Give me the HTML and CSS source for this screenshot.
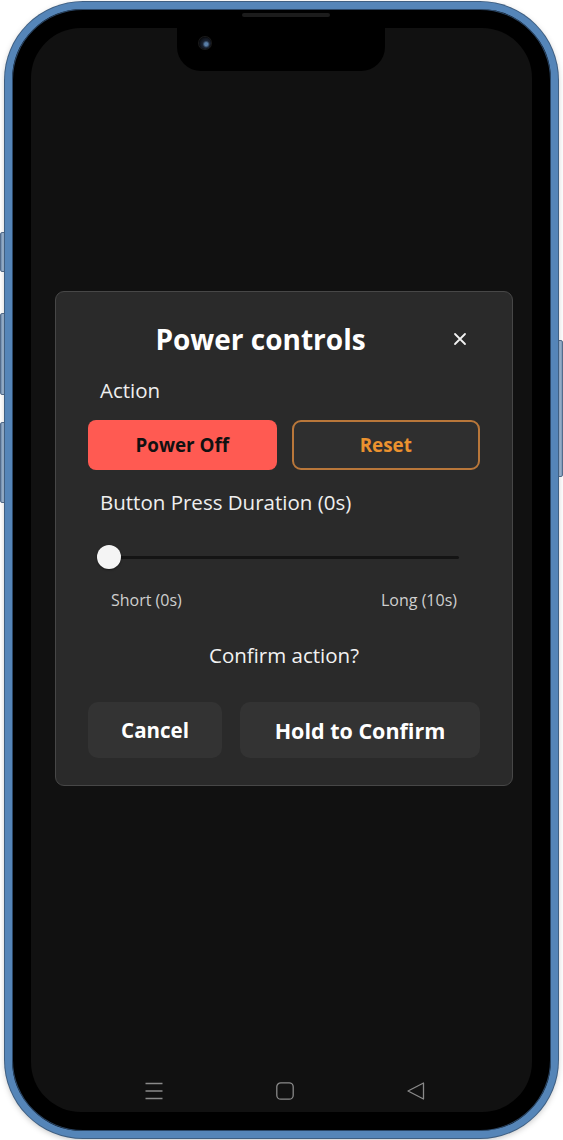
FILE: index.html
```html
<!DOCTYPE html>
<html lang="en">
<head>
<meta charset="utf-8">
<title>Power controls</title>
<link rel="stylesheet" href="styles.css">
</head>
<body>
<div class="device">
  <span class="side-btn side-btn--l1"></span>
  <span class="side-btn side-btn--l2"></span>
  <span class="side-btn side-btn--l3"></span>
  <span class="side-btn side-btn--r1"></span>
  <div class="phone">
    <span class="speaker"></span>
    <div class="screen">
      <div class="notch"><span class="camera"></span></div>

      <section class="dialog">
        <header class="dialog-head">
          <h1 class="dialog-title">Power controls</h1>
          <button class="close-btn" aria-label="Close">
            <svg width="14" height="14" viewBox="0 0 14 14"><path d="M2 2 L12 12 M12 2 L2 12" stroke="#f2f2f2" stroke-width="1.8" stroke-linecap="round" fill="none"/></svg>
          </button>
        </header>

        <div class="field-label field-label--action">Action</div>
        <div class="action-row">
          <button class="btn btn-power">Power Off</button>
          <button class="btn btn-reset">Reset</button>
        </div>

        <div class="field-label field-label--duration">Button Press Duration (0s)</div>
        <div class="slider">
          <div class="slider-track"></div>
          <span class="slider-thumb"></span>
        </div>
        <div class="slider-scale">
          <span>Short (0s)</span>
          <span>Long (10s)</span>
        </div>

        <p class="confirm-text">Confirm action?</p>

        <div class="confirm-row">
          <button class="btn btn-cancel">Cancel</button>
          <button class="btn btn-hold">Hold to Confirm</button>
        </div>
      </section>

      <nav class="navbar">
        <svg class="nav-icon" width="20" height="18" viewBox="0 0 20 18"><path d="M1.5 1.5 H18.5 M1.5 9 H18.5 M1.5 16.5 H18.5" stroke="#8a8a8a" stroke-width="1.3" fill="none"/></svg>
        <svg class="nav-icon" width="20" height="18" viewBox="0 0 20 18"><rect x="1.8" y="0.8" width="16.4" height="16.4" rx="4" stroke="#8a8a8a" stroke-width="1.3" fill="none"/></svg>
        <svg class="nav-icon" width="20" height="18" viewBox="0 0 20 18"><path d="M17.5 1 V17 L2 9 Z" stroke="#8a8a8a" stroke-width="1.3" stroke-linejoin="round" fill="none"/></svg>
      </nav>
    </div>
  </div>
</div>
</body>
</html>
```

FILE: styles.css
```css
* { box-sizing: border-box; }

html, body {
  margin: 0;
  padding: 0;
  background: #ffffff;
}

body {
  font-family: "Open Sans", "Noto Sans", sans-serif;
  width: 563px;
  height: 1140px;
  overflow: hidden;
}

.device {
  position: relative;
  width: 563px;
  height: 1140px;
  padding: 2px 5px 2px 5px;
}

.side-btn {
  position: absolute;
  width: 6px;
  border-radius: 2px;
  background: linear-gradient(90deg, #6f8fb3, #a9bfd8 50%, #7d9bbd);
  border: 1px solid #566f8e;
}
.side-btn--l1 { left: 0; top: 232px; height: 40px; }
.side-btn--l2 { left: 0; top: 313px; height: 82px; }
.side-btn--l3 { left: 0; top: 422px; height: 81px; }
.side-btn--r1 { right: 0; top: 340px; height: 137px; }

.phone {
  position: relative;
  width: 553px;
  height: 1136px;
  border-radius: 78px;
  background: #000;
  border: 7px solid #5585b8;
  box-shadow: inset 0 0 0 1px #2b4767, 0 0 0 1px #3f5f82, 0 2px 6px rgba(0,0,0,0.25);
  padding: 19px;
}

.speaker {
  position: absolute;
  top: 4px;
  left: 230px;
  width: 88px;
  height: 4px;
  border-radius: 2px;
  background: #1c1c1c;
}

.screen {
  position: relative;
  width: 501px;
  height: 1084px;
  border-radius: 50px;
  background: #111111;
  display: flex;
  flex-direction: column;
  overflow: hidden;
}

.notch {
  position: absolute;
  top: 0;
  left: 146px;
  width: 208px;
  height: 43px;
  background: #000;
  border-radius: 0 0 24px 24px;
}

.camera {
  position: absolute;
  left: 22px;
  top: 9px;
  width: 12px;
  height: 12px;
  border-radius: 50%;
  background: radial-gradient(circle at 60% 60%, #5a7fa8 0 15%, #1b2433 35%, #0b0d12 70%);
  box-shadow: 0 0 0 1px #1a1a1a;
}

.dialog {
  margin: 263px 0 0 24px;
  width: 458px;
  background: #2a2a2a;
  border: 1px solid #474747;
  border-radius: 9px;
  padding: 27px 32px 27px;
  color: #f2f2f2;
}

.dialog-head {
  display: flex;
  align-items: center;
  height: 40px;
}

.dialog-title {
  flex: 1;
  margin: 0;
  padding-right: 7px;
  text-align: center;
  font-size: 28px;
  line-height: 40px;
  font-weight: 700;
  color: #ffffff;
}

.close-btn {
  width: 40px;
  height: 40px;
  padding: 0;
  border: 0;
  background: transparent;
  display: flex;
  align-items: center;
  justify-content: center;
}

.field-label {
  padding-left: 12px;
  font-size: 20.5px;
  line-height: 26px;
  color: #efefef;
}
.field-label--action { margin-top: 18px; }
.field-label--duration { margin-top: 19px; }

.btn {
  font-family: "Open Sans", "Noto Sans", sans-serif;
  font-weight: 700;
  border: 0;
  padding: 0;
  cursor: pointer;
}

.action-row {
  margin-top: 17px;
  display: grid;
  grid-template-columns: 1fr 1fr;
  gap: 15px;
  height: 50px;
}

.btn-power {
  background: #ff5a52;
  color: #111;
  border-radius: 8px;
  font-size: 18.8px;
}

.btn-reset {
  background: #2f2f2f;
  border: 2px solid #b9773a;
  color: #eb922f;
  border-radius: 9px;
  font-size: 18.8px;
}

.slider {
  position: relative;
  margin: 30px 21px 0 9px;
  height: 24px;
  display: flex;
  align-items: center;
}

.slider-track {
  flex: 1;
  height: 3px;
  border-radius: 2px;
  background: #141414;
}

.slider-thumb {
  position: absolute;
  left: 0;
  top: 0;
  width: 24px;
  height: 24px;
  border-radius: 50%;
  background: #f4f4f4;
  box-shadow: 0 1px 2px rgba(0,0,0,0.4);
}

.slider-scale {
  margin-top: 21px;
  padding: 0 23px;
  display: flex;
  justify-content: space-between;
  font-size: 16px;
  line-height: 20px;
  color: #cfcfcf;
}

.confirm-text {
  margin: 32px 0 0;
  text-align: center;
  font-size: 20.5px;
  line-height: 26px;
  color: #f2f2f2;
}

.confirm-row {
  margin-top: 34px;
  display: grid;
  grid-template-columns: 134px 1fr;
  gap: 18px;
  height: 56px;
}

.btn-cancel,
.btn-hold {
  background: #333333;
  color: #ffffff;
  border-radius: 10px;
  font-size: 20.5px;
}

.btn-hold { font-size: 21.5px; }

.navbar {
  margin-top: auto;
  height: 44px;
  padding: 2px 0 0 7px;
  display: flex;
  justify-content: center;
  align-items: center;
  gap: 111px;
}

.nav-icon { display: block; }
```
